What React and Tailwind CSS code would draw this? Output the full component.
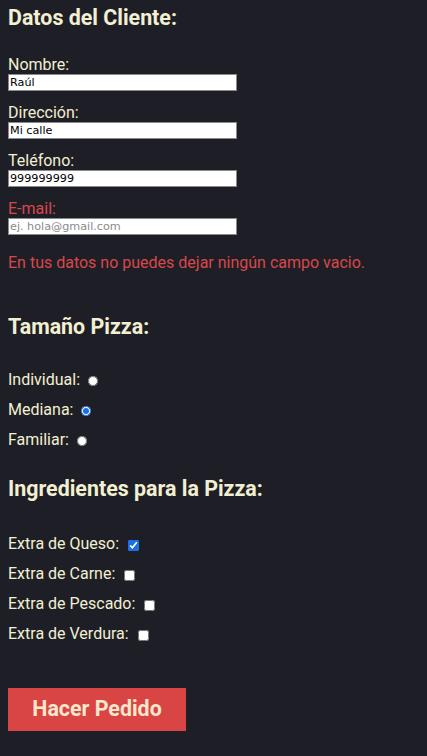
import { useState } from 'react';

const cream = 'text-[#f3efd2]';

function Campo({ label, value, placeholder, error }) {
    return (
        <div className="mb-[12px]">
            <label className={`block text-[16px] leading-[19px] ${error ? 'text-[#d9474a]' : cream}`}>{label}</label>
            <input
                type="text"
                defaultValue={value}
                placeholder={placeholder}
                className="block w-[229px] h-[17px] bg-white border border-[#8a8a8a] px-[1px] text-[11.2px] text-black placeholder:text-[#8a8a8a] outline-none"
                style={{ fontFamily: '"DejaVu Sans", Tahoma, sans-serif' }}
            />
        </div>
    );
}

export default function App() {
    const [size, setSize] = useState('mediana');
    const [extras, setExtras] = useState({ queso: true, carne: false, pescado: false, verdura: false });

    const toggle = (k) => setExtras({ ...extras, [k]: !extras[k] });

    return (
        <div className="min-h-[756px] bg-[#1e1f26] px-[8px] pt-[6px] pb-[20px]" style={{ fontFamily: 'Roboto, "Noto Sans", sans-serif' }}>
            <h2 className={`text-[21.4px] leading-[24px] font-bold ${cream} mb-[25px]`}>Datos del Cliente:</h2>

            <Campo label="Nombre:" value="Raúl" />
            <Campo label="Dirección:" value="Mi calle" />
            <Campo label="Teléfono:" value="999999999" />
            <Campo label="E-mail:" placeholder="ej. hola@gmail.com" error />

            <p className="text-[16px] leading-[19px] text-[#d9474a] mt-[18px]">En tus datos no puedes dejar ningún campo vacio.</p>

            <h2 className={`text-[21.4px] leading-[24px] font-bold ${cream} mt-[43px] mb-[31px]`}>Tamaño Pizza:</h2>

            <div className="flex flex-col gap-[10px]">
                {[
                    ['individual', 'Individual:'],
                    ['mediana', 'Mediana:'],
                    ['familiar', 'Familiar:'],
                ].map(([k, t]) => (
                    <label key={k} className={`flex items-center h-[20px] text-[16px] ${cream}`}>
                        {t}
                        <input
                            type="radio"
                            name="size"
                            checked={size === k}
                            onChange={() => setSize(k)}
                            className="ml-[8px] mt-[2px] w-[10px] h-[10px] accent-[#1a6ee6]"
                        />
                    </label>
                ))}
            </div>

            <h2 className={`text-[21.4px] leading-[24px] font-bold ${cream} mt-[27px] mb-[33px]`}>Ingredientes para la Pizza:</h2>

            <div className="flex flex-col gap-[10px]">
                {[
                    ['queso', 'Extra de Queso:'],
                    ['carne', 'Extra de Carne:'],
                    ['pescado', 'Extra de Pescado:'],
                    ['verdura', 'Extra de Verdura:'],
                ].map(([k, t]) => (
                    <label key={k} className={`flex items-center h-[20px] text-[16px] ${cream}`}>
                        {t}
                        <input
                            type="checkbox"
                            checked={extras[k]}
                            onChange={() => toggle(k)}
                            className="ml-[9px] mt-[2px] w-[11px] h-[11px] accent-[#1a6ee6]"
                        />
                    </label>
                ))}
            </div>

            <button className="mt-[44px] w-[178px] h-[43px] bg-[#d94444] text-[#fbe8cc] text-[21.4px] font-bold">
                Hacer Pedido
            </button>
        </div>
    );
}
